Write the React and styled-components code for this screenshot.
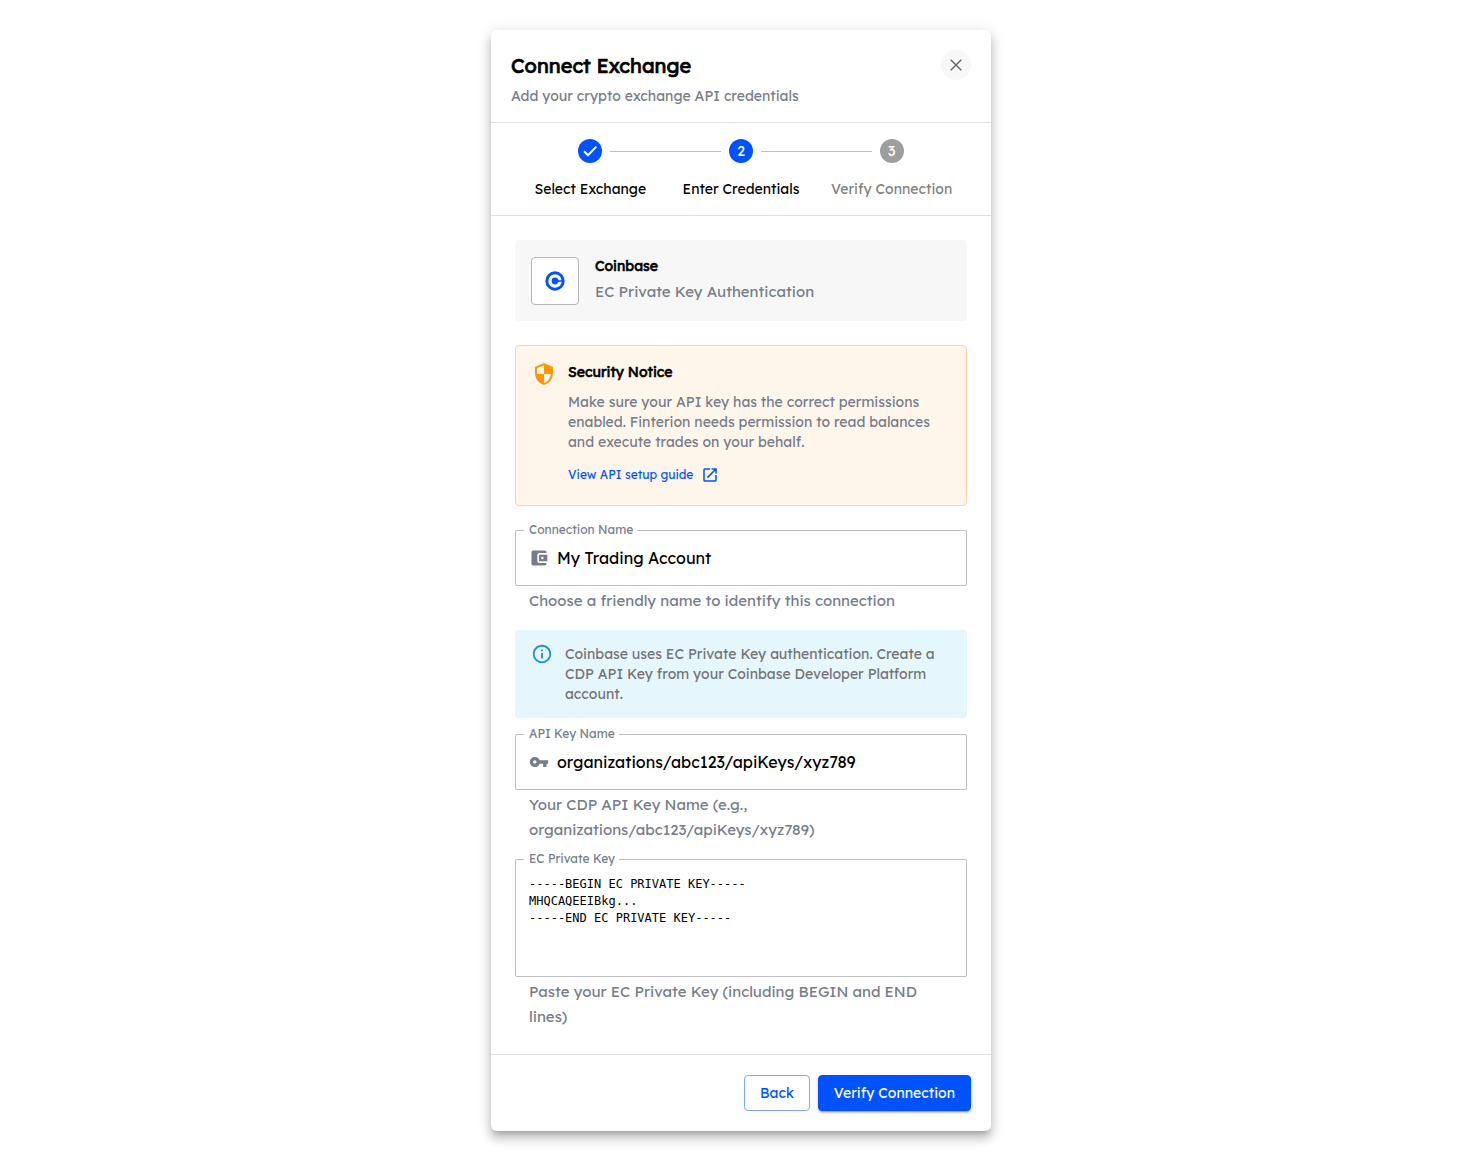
import React from "react";
import styled, { createGlobalStyle, css } from "styled-components";
import { MdAccountBalanceWallet, MdInfoOutline, MdOpenInNew, MdSecurity, MdVpnKey } from "react-icons/md";

const steps = [
  { label: "Select Exchange", done: true, active: true },
  { label: "Enter Credentials", done: false, active: true },
  { label: "Verify Connection", done: false, active: false },
];

const CloseIcon = () => (
  <svg width="12" height="12" viewBox="0 0 12 12" fill="none" stroke="currentColor" strokeWidth="1.4" aria-hidden="true">
    <path d="M0.7 0.7L11.3 11.3M11.3 0.7L0.7 11.3" />
  </svg>
);

const CheckIcon = () => (
  <svg width="24" height="24" viewBox="0 0 24 24" fill="none" stroke="currentColor" strokeWidth="2" aria-hidden="true">
    <path d="M6 12.2L10 16.2L18.3 7.6" />
  </svg>
);

const CoinbaseLogo = () => (
  <svg width="20" height="20" viewBox="0 0 20 20" fill="none" aria-hidden="true">
    <circle cx="10" cy="10" r="8.2" stroke="#0052ff" strokeWidth="2.9" />
    <circle cx="10" cy="10" r="3.4" fill="#0052ff" />
    <path d="M12 10H18" stroke="#0052ff" strokeWidth="1.6" />
  </svg>
);

const Stepper = () => (
  <Steps>
    {steps.map((step, i) => (
      <Step key={step.label}>
        <StepHead>
          <Connector $hidden={i === 0} />
          <StepDot $active={step.active}>{step.done ? <CheckIcon /> : i + 1}</StepDot>
          <Connector $hidden={i === steps.length - 1} />
        </StepHead>
        <StepLabel $active={step.active}>{step.label}</StepLabel>
      </Step>
    ))}
  </Steps>
);

const Field = ({ id, label, helper, icon, value, multiline }) => (
  <FieldGroup>
    <FieldBox>
      <FieldLabel htmlFor={id}>{label}</FieldLabel>
      {icon}
      {multiline ? (
        <KeyArea id={id} rows={5} defaultValue={value} spellCheck={false} aria-describedby={`${id}-helper`} />
      ) : (
        <TextInput id={id} type="text" defaultValue={value} spellCheck={false} aria-describedby={`${id}-helper`} />
      )}
    </FieldBox>
    <Helper id={`${id}-helper`}>{helper}</Helper>
  </FieldGroup>
);

const App = () => {
  return (
    <Page>
      <GlobalStyle />
      <Dialog role="dialog" aria-labelledby="dialog-title">
        <Header>
          <div>
            <Title id="dialog-title">Connect Exchange</Title>
            <Subtitle>Add your crypto exchange API credentials</Subtitle>
          </div>
          <CloseButton type="button" aria-label="Close">
            <CloseIcon />
          </CloseButton>
        </Header>
        <Stepper />
        <Body>
          <Exchange>
            <LogoBox>
              <CoinbaseLogo />
            </LogoBox>
            <div>
              <SectionTitle>Coinbase</SectionTitle>
              <ExchangeType>EC Private Key Authentication</ExchangeType>
            </div>
          </Exchange>
          <Notice>
            <MdSecurity size={24} color="#ff9800" />
            <NoticeContent>
              <SectionTitle>Security Notice</SectionTitle>
              <NoticeText>
                Make sure your API key has the correct permissions enabled. Finterion needs permission to read balances
                and execute trades on your behalf.
              </NoticeText>
              <GuideLink href="#guide">
                View API setup guide
                <MdOpenInNew size={18} />
              </GuideLink>
            </NoticeContent>
          </Notice>
          <Fields>
            <Field
              id="connection-name"
              label="Connection Name"
              helper="Choose a friendly name to identify this connection"
              icon={<MdAccountBalanceWallet size={20} />}
              value="My Trading Account"
            />
            <Info>
              <InfoIcon>
                <MdInfoOutline size={22} />
              </InfoIcon>
              <InfoText>
                Coinbase uses EC Private Key authentication. Create a CDP API Key from your Coinbase Developer Platform
                account.
              </InfoText>
            </Info>
            <Field
              id="api-key-name"
              label="API Key Name"
              helper="Your CDP API Key Name (e.g., organizations/abc123/apiKeys/xyz789)"
              icon={<MdVpnKey size={20} />}
              value="organizations/abc123/apiKeys/xyz789"
            />
            <Field
              id="private-key"
              label="EC Private Key"
              helper="Paste your EC Private Key (including BEGIN and END lines)"
              value={"-----BEGIN EC PRIVATE KEY-----\nMHQCAQEEIBkg...\n-----END EC PRIVATE KEY-----"}
              multiline
            />
          </Fields>
        </Body>
        <Footer>
          <Button type="button">Back</Button>
          <Button type="button" $primary>
            Verify Connection
          </Button>
        </Footer>
      </Dialog>
    </Page>
  );
};

const GlobalStyle = createGlobalStyle`
  * {
    box-sizing: border-box;
  }

  body {
    margin: 0;
    background: #fff;
    color: #000;
    font-family: Lexend, Inter, "Liberation Sans", sans-serif;
    font-size: 14px;
    line-height: 20px;
  }

  h1, h2, p {
    margin: 0;
  }

  svg {
    flex-shrink: 0;
  }
`;

const Page = styled.main`
  min-height: 100vh;
  display: flex;
  align-items: center;
  justify-content: center;
`;

const Dialog = styled.div`
  width: 100%;
  max-width: 500px;
  background: #fff;
  border-radius: 6px;
  box-shadow: 0 5px 5px -3px rgba(0, 0, 0, 0.2), 0 8px 10px 1px rgba(0, 0, 0, 0.14),
    0 3px 14px 2px rgba(0, 0, 0, 0.12);
`;

const Header = styled.header`
  display: flex;
  align-items: flex-start;
  justify-content: space-between;
  padding: 20px 20px 16px;
  border-bottom: 1px solid #e0e0e0;
`;

/* headings keep the regular width and get their weight from a stroke */
const Title = styled.h1`
  margin-bottom: 4px;
  font-size: 20px;
  font-weight: 400;
  line-height: 32px;
  -webkit-text-stroke: 0.7px currentColor;
`;

const Subtitle = styled.p`
  color: #757c8a;
`;

const CloseButton = styled.button`
  display: flex;
  align-items: center;
  justify-content: center;
  width: 30px;
  height: 30px;
  padding: 0;
  border: none;
  border-radius: 50%;
  background: #f7f7f7;
  color: #666;
  cursor: pointer;
`;

const Steps = styled.ol`
  display: flex;
  margin: 0;
  padding: 16px 24px;
  list-style: none;
  border-bottom: 1px solid #e0e0e0;
`;

const Step = styled.li`
  flex: 1;
  text-align: center;
`;

const StepHead = styled.div`
  display: flex;
  align-items: center;
  gap: 8px;
  margin-bottom: 16px;
`;

const Connector = styled.span`
  flex: 1;
  height: 1px;
  background: ${(props) => (props.$hidden ? "transparent" : "#bdbdbd")};
`;

const StepDot = styled.span`
  display: flex;
  align-items: center;
  justify-content: center;
  width: 24px;
  height: 24px;
  border-radius: 50%;
  background: ${(props) => (props.$active ? "#0052ff" : "#9e9e9e")};
  color: #fff;
`;

const StepLabel = styled.div`
  color: ${(props) => (props.$active ? "#000" : "#7f7f7f")};
`;

const Body = styled.div`
  display: flex;
  flex-direction: column;
  gap: 24px;
  padding: 24px;
`;

const Exchange = styled.section`
  display: flex;
  align-items: center;
  gap: 16px;
  padding: 16px;
  border-radius: 4px;
  background: #f7f7f7;
`;

const LogoBox = styled.div`
  display: flex;
  align-items: center;
  justify-content: center;
  width: 48px;
  height: 48px;
  border: 1px solid #b5b5b5;
  border-radius: 4px;
  background: #fff;
`;

const SectionTitle = styled.h2`
  font-size: 14px;
  font-weight: 400;
  line-height: 20px;
  -webkit-text-stroke: 0.6px currentColor;
`;

const ExchangeType = styled.p`
  margin: 3px 0 1px;
  color: #757c8a;
  font-size: 15px;
  line-height: 25px;
`;

const Notice = styled.section`
  display: flex;
  align-items: flex-start;
  gap: 12px;
  padding: 16px;
  border: 1px solid #ffd699;
  border-radius: 4px;
  background: #fff6eb;
`;

const NoticeContent = styled.div`
  flex: 1;
`;

const NoticeText = styled.p`
  margin: 10px 0 8px;
  color: #757c8a;
`;

const GuideLink = styled.a`
  display: inline-flex;
  align-items: center;
  gap: 8px;
  height: 29px;
  vertical-align: top;
  color: #0052ff;
  font-size: 12px;
  text-decoration: none;
`;

const Fields = styled.div`
  display: flex;
  flex-direction: column;
  gap: 16px;
`;

const FieldGroup = styled.div`
  display: flex;
  flex-direction: column;
`;

const FieldBox = styled.div`
  position: relative;
  display: flex;
  align-items: center;
  gap: 8px;
  padding: 0 13px;
  border: 1px solid #bdbdbd;
  border-radius: 2px;
  color: #757c8a;
`;

const FieldLabel = styled.label`
  position: absolute;
  top: -8px;
  left: 8px;
  padding: 0 4px 0 5px;
  background: #fff;
  font-size: 12px;
  line-height: 14px;
`;

const TextInput = styled.input`
  flex: 1;
  min-width: 0;
  height: 54px;
  padding: 0;
  border: none;
  outline: none;
  background: transparent;
  color: #000;
  font-family: inherit;
  font-size: 16px;
`;

const KeyArea = styled.textarea`
  flex: 1;
  height: 116px;
  padding: 16px 0;
  border: none;
  outline: none;
  resize: none;
  background: transparent;
  color: #000;
  font-family: "DejaVu Sans Mono", monospace;
  font-size: 12px;
  line-height: 17px;
`;

const Helper = styled.p`
  margin: 2px 14px 1px;
  color: #757c8a;
  font-size: 15px;
  line-height: 25px;
`;

const Info = styled.div`
  display: flex;
  align-items: flex-start;
  gap: 12px;
  padding: 14px 16px;
  border-radius: 4px;
  background: #e5f6fd;
`;

const InfoIcon = styled.span`
  display: flex;
  align-items: center;
  height: 20px;
  color: #1a94d9;
`;

const InfoText = styled.p`
  color: #737373;
`;

const Footer = styled.footer`
  display: flex;
  justify-content: flex-end;
  gap: 8px;
  padding: 20px;
  border-top: 1px solid #e0e0e0;
`;

const Button = styled.button`
  height: 36px;
  padding: 0 15px;
  border: 1px solid #80a8ff;
  border-radius: 4px;
  background: #fff;
  color: #0052ff;
  font-family: inherit;
  font-size: 14px;
  cursor: pointer;

  ${(props) =>
    props.$primary &&
    css`
      border-color: #0052ff;
      background: #0052ff;
      color: #fff;
      box-shadow: 0 3px 1px -2px rgba(0, 0, 0, 0.2), 0 2px 2px 0 rgba(0, 0, 0, 0.14), 0 1px 5px 0 rgba(0, 0, 0, 0.12);
    `}
`;

export default App;
